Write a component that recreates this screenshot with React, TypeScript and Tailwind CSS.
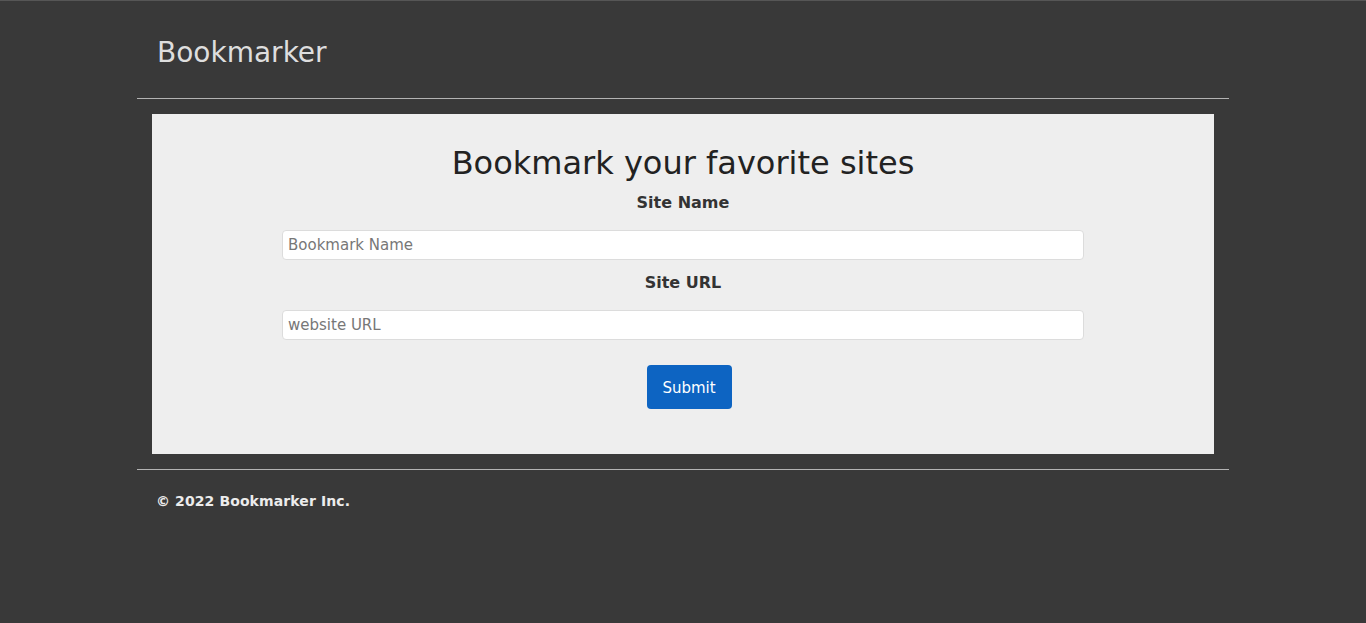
import React from 'react'

const font = { fontFamily: '"DejaVu Sans", Verdana, sans-serif' }

export default function App() {
  return (
    <div
      className="min-h-[623px] w-full bg-[#393939] border-t border-[#565656]"
      style={font}
    >
      <div className="mx-auto w-[1092px]">
        <header className="pl-5 pt-[35px] pb-[28px]">
          <h3 className="text-[28px] leading-[1.2] text-[#dedede]">Bookmarker</h3>
        </header>
        <hr className="border-0 border-t border-[#b3b3b3]" />

        <div className="mx-[15px] mt-[15px] bg-[#eeeeee] pt-[30px] pb-[45px] flex flex-col items-center">
          <h1 className="text-[32px] leading-[38px] text-[#222]">
            Bookmark your favorite sites
          </h1>
          <form
            className="w-[802px] flex flex-col items-center"
            onSubmit={(e) => e.preventDefault()}
          >
            <label className="mt-[9px] mb-[15px] text-base leading-6 font-bold text-[#333]">
              Site Name
            </label>
            <input
              type="text"
              placeholder="Bookmark Name"
              className="w-full h-[30px] bg-white border border-[#dcdcdc] rounded-[4px] px-[5px] text-[15px] text-[#333] placeholder:text-[#777] outline-none"
              style={font}
            />
            <label className="mt-[11px] mb-[15px] text-base leading-6 font-bold text-[#333]">
              Site URL
            </label>
            <input
              type="text"
              placeholder="website URL"
              className="w-full h-[30px] bg-white border border-[#dcdcdc] rounded-[4px] px-[5px] text-[15px] text-[#333] placeholder:text-[#777] outline-none"
              style={font}
            />
            <button
              type="submit"
              className="mt-[25px] ml-[12px] w-[85px] h-[44px] pt-1 rounded-[4px] bg-[#0d64c2] text-white text-[15px]"
              style={font}
            >
              Submit
            </button>
          </form>
        </div>

        <hr className="mt-[15px] border-0 border-t border-[#b3b3b3]" />
        <footer className="pl-[19px] pt-[21px]">
          <p className="text-[14px] leading-5 font-bold text-[#ececec] tracking-[0.1px]">
            © 2022 Bookmarker Inc.
          </p>
        </footer>
      </div>
    </div>
  )
}
